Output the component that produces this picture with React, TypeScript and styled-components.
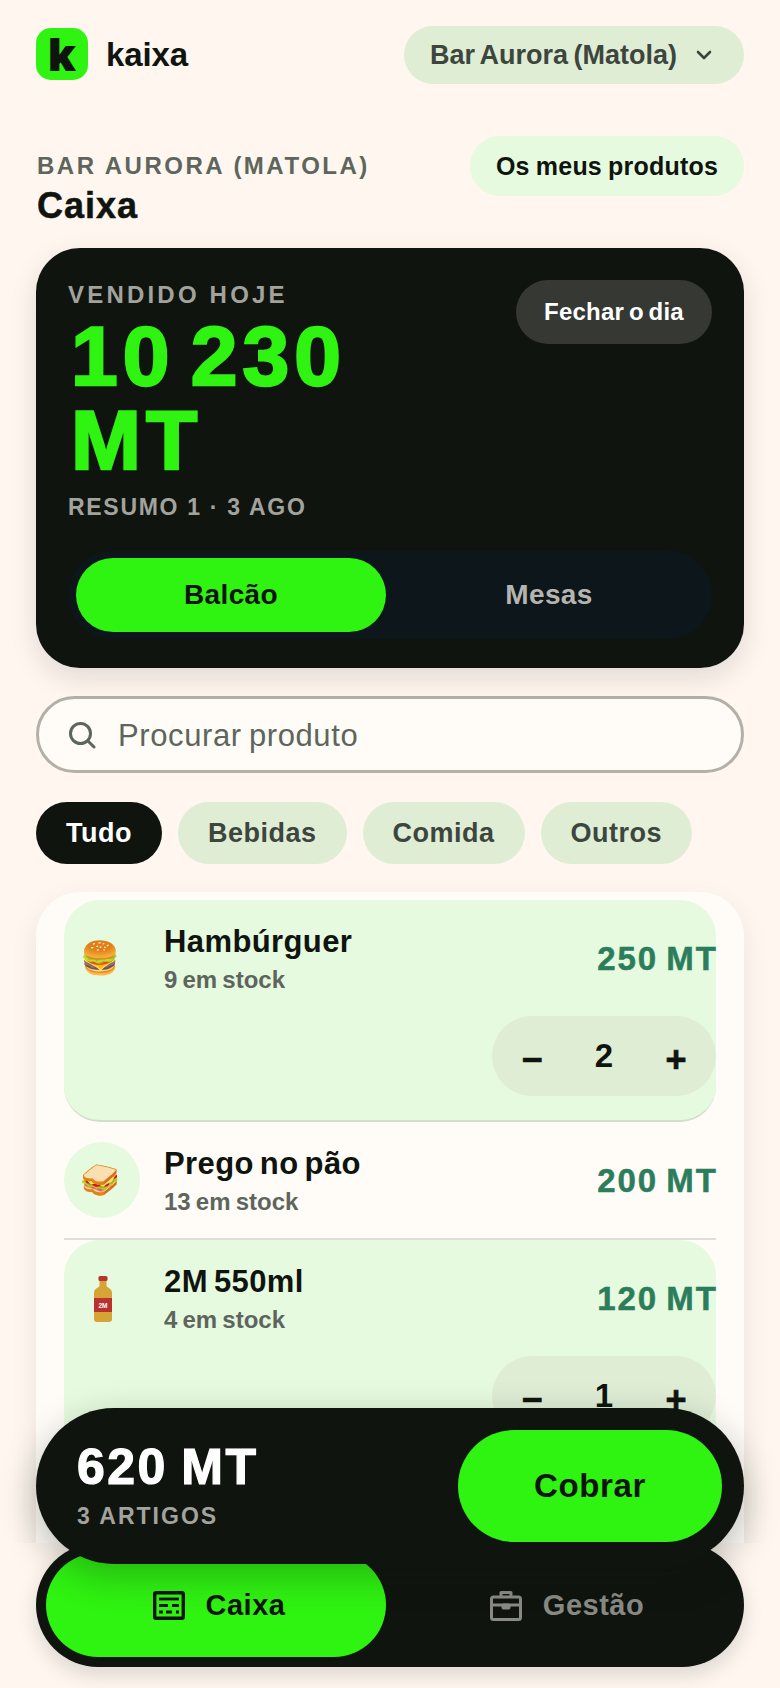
import React from 'react';
import styled, { createGlobalStyle } from 'styled-components';

const ink = '#10140f';
const lime = '#2ff311';
const mint = '#e6fadf';
const sage = '#dfedd5';
const muted = '#5d655c';
const sans = '"Liberation Sans", Arial, sans-serif';

const GlobalStyle = createGlobalStyle`
  * { box-sizing: border-box; }
  html, body { margin: 0; padding: 0; background: #fef6ef; }
  body { font-family: ${sans}; color: ${ink}; }
`;

const Page = styled.div`
  position: relative;
  height: 1688px;
  overflow: hidden;
  padding: 26px 36px 0;
  background: #fef6ef;
`;

const Header = styled.header`
  display: flex;
  align-items: center;
  justify-content: space-between;
  height: 58px;
`;

const Brand = styled.div`
  display: flex;
  align-items: center;
  gap: 18px;
`;

const LogoTile = styled.div`
  width: 52px;
  height: 52px;
  margin-top: -2px;
  border-radius: 15px;
  background: ${lime};
  display: flex;
  align-items: center;
  justify-content: center;
  font-family: Inter, sans-serif;
  font-weight: 900;
  font-size: 46px;
  line-height: 52px;
  color: ${ink};
`;

const BrandName = styled.span`
  font-size: 33px;
  font-weight: 700;
  letter-spacing: -0.1px;
`;

const StorePicker = styled.button`
  display: flex;
  align-items: center;
  gap: 18px;
  width: 340px;
  height: 58px;
  padding: 0 26px;
  border: none;
  border-radius: 29px;
  background: ${sage};
  color: #3d463d;
  font-family: ${sans};
  font-size: 27px;
  font-weight: 700;
  word-spacing: -2px;
  white-space: nowrap;
`;

const TitleRow = styled.div`
  display: flex;
  align-items: flex-start;
  justify-content: space-between;
  margin-top: 52px;
  height: 112px;
`;

const TitleBlock = styled.div`
  padding-top: 15px;
`;

const Eyebrow = styled.div`
  margin-left: 1px;
  font-size: 24px;
  line-height: 30px;
  font-weight: 700;
  letter-spacing: 2.5px;
  color: ${muted};
`;

const PageTitle = styled.h1`
  margin: 5px 0 0 1px;
  font-size: 36px;
  line-height: 40px;
  font-weight: 700;
  letter-spacing: 1px;
  -webkit-text-stroke: 0.5px ${ink};
`;

const ProductsButton = styled.button`
  width: 274px;
  height: 60px;
  border: none;
  border-radius: 30px;
  background: ${mint};
  color: ${ink};
  font-family: ${sans};
  font-size: 25px;
  font-weight: 700;
  letter-spacing: 0.2px;
  word-spacing: -1px;
`;

const Hero = styled.section`
  position: relative;
  height: 420px;
  padding: 33px 32px 29px;
  border-radius: 44px;
  background: ${ink};
  box-shadow: 0 10px 28px rgba(16, 20, 15, 0.12);
`;

const HeroLabel = styled.div`
  font-size: 24px;
  line-height: 27px;
  font-weight: 700;
  letter-spacing: 3.2px;
  color: #a3a39d;
`;

const Amount = styled.div`
  max-width: 400px;
  margin: 6px 0 0 3px;
  font-size: 84px;
  line-height: 84px;
  font-weight: 700;
  letter-spacing: 5px;
  word-spacing: -12px;
  color: ${lime};
  -webkit-text-stroke: 2.5px ${lime};
`;

const HeroNote = styled(HeroLabel)`
  margin-top: 12px;
  font-size: 23px;
  letter-spacing: 1.7px;
`;

const CloseDay = styled.button`
  position: absolute;
  top: 32px;
  right: 32px;
  width: 196px;
  height: 64px;
  border: none;
  border-radius: 32px;
  background: #363833;
  color: #fff;
  font-family: ${sans};
  font-size: 24px;
  font-weight: 700;
  letter-spacing: 0.2px;
  word-spacing: -2px;
`;

const Toggle = styled.div`
  display: grid;
  grid-template-columns: 1fr 1fr;
  gap: 8px;
  height: 88px;
  margin-top: 30px;
  padding: 7px 8px;
  border-radius: 44px;
  background: #0d161a;
`;

const ToggleOption = styled.div<{ $active?: boolean }>`
  display: flex;
  align-items: center;
  justify-content: center;
  border-radius: 37px;
  font-size: 28px;
  font-weight: 700;
  letter-spacing: 0.4px;
  background: ${(p) => (p.$active ? lime : 'transparent')};
  color: ${(p) => (p.$active ? ink : '#b5b5b0')};
`;

const Search = styled.div`
  display: flex;
  align-items: center;
  gap: 22px;
  height: 77px;
  margin-top: 28px;
  padding: 0 29px;
  border: 3px solid #b3b0a8;
  border-radius: 39px;
  background: #fffcf7;
  font-size: 31px;
  letter-spacing: 0.6px;
  word-spacing: -2px;
  color: ${muted};
`;

const SearchText = styled.span`
  margin-top: 2px;
`;

const Chips = styled.div`
  display: flex;
  gap: 16px;
  margin-top: 29px;
`;

const Chip = styled.div<{ $active?: boolean }>`
  display: flex;
  align-items: center;
  height: 62px;
  padding: 0 30px;
  border-radius: 31px;
  font-size: 27px;
  font-weight: 700;
  letter-spacing: 0.5px;
  background: ${(p) => (p.$active ? ink : sage)};
  color: ${(p) => (p.$active ? '#fff' : '#3d463d')};
`;

const List = styled.section`
  margin-top: 28px;
  padding: 8px 28px 320px;
  border-radius: 44px;
  background: #fffcf7;
  box-shadow: 0 10px 28px rgba(16, 20, 15, 0.08);
`;

const Row = styled.article<{ $selected?: boolean }>`
  padding: 20px 0 ${(p) => (p.$selected ? '24px' : '20px')};
  border-bottom: 2px solid ${(p) => (p.$selected ? '#cfdfc8' : '#dfdfda')};
  border-radius: ${(p) => (p.$selected ? '36px' : '0')};
  background: ${(p) => (p.$selected ? mint : 'transparent')};
`;

const RowMain = styled.div`
  display: flex;
  align-items: center;
  gap: 24px;
`;

const Thumb = styled.div`
  flex: none;
  display: flex;
  align-items: center;
  justify-content: center;
  width: 76px;
  height: 76px;
  padding-right: 4px;
  border-radius: 50%;
  background: ${mint};
  font-size: 32px;
  line-height: 1;
`;

const RowInfo = styled.div`
  flex: 1;
  padding-top: 2px;
`;

const ProductName = styled.div`
  font-size: 31px;
  line-height: 38px;
  font-weight: 700;
  letter-spacing: 0.4px;
  word-spacing: -3px;
`;

const Stock = styled.div`
  margin-top: 4px;
  font-size: 24px;
  line-height: 30px;
  font-weight: 700;
  word-spacing: -1.5px;
  color: ${muted};
`;

const Price = styled.div`
  margin: 2px -2px 0 0;
  font-size: 33px;
  font-weight: 700;
  letter-spacing: 2px;
  word-spacing: -3px;
  color: #2c7d5c;
  -webkit-text-stroke: 0.5px #2c7d5c;
`;

const Stepper = styled.div`
  display: grid;
  grid-template-columns: repeat(3, 1fr);
  align-items: center;
  width: 224px;
  height: 80px;
  margin: 20px 0 0 auto;
  padding: 0 4px;
  border-radius: 40px;
  background: ${sage};
  font-size: 33px;
  font-weight: 700;
  text-align: center;
`;

const StepSign = styled.span`
  padding-top: 8px;
  font-size: 36px;
  -webkit-text-stroke: 0.7px ${ink};
`;

const Checkout = styled.div`
  position: absolute;
  z-index: 2;
  left: 36px;
  right: 36px;
  top: 1408px;
  height: 156px;
  display: flex;
  align-items: center;
  justify-content: space-between;
  padding: 0 22px 0 41px;
  border-radius: 78px;
  background: ${ink};
  box-shadow: 0 12px 36px rgba(16, 20, 15, 0.28);
`;

const TotalBlock = styled.div`
  margin-top: -3px;
`;

const Total = styled.div`
  font-size: 50px;
  line-height: 56px;
  font-weight: 700;
  letter-spacing: 2.5px;
  word-spacing: -3px;
  color: #fff;
  -webkit-text-stroke: 1.2px #fff;
`;

const ItemCount = styled.div`
  margin-top: 7px;
  font-size: 23px;
  line-height: 28px;
  font-weight: 700;
  letter-spacing: 2px;
  color: #a3a39d;
`;

const ChargeButton = styled.button`
  width: 264px;
  height: 112px;
  border: none;
  border-radius: 56px;
  background: ${lime};
  color: ${ink};
  font-family: ${sans};
  font-size: 33px;
  font-weight: 700;
  letter-spacing: 0.6px;
`;

const BottomArea = styled.div`
  position: absolute;
  z-index: 1;
  left: 0;
  right: 0;
  bottom: 0;
  height: 145px;
  padding: 0 36px;
  background: #fef6ef;
`;

const Nav = styled.nav`
  display: grid;
  grid-template-columns: 1fr 1fr;
  gap: 8px;
  height: 124px;
  padding: 10px;
  border-radius: 62px;
  background: ${ink};
  box-shadow: 0 8px 20px rgba(16, 20, 15, 0.14);
`;

const NavTab = styled.div<{ $active?: boolean }>`
  display: flex;
  align-items: center;
  justify-content: center;
  gap: 21px;
  padding-left: 6px;
  border-radius: 52px;
  font-size: 29px;
  font-weight: 700;
  letter-spacing: 0.5px;
  background: ${(p) => (p.$active ? lime : 'transparent')};
  color: ${(p) => (p.$active ? ink : '#8a8a84')};
`;

const BottleArt = styled.svg`
  margin: 2px 0 0 6px;
`;

const Chevron = () => (
  <svg width="18" height="18" viewBox="0 0 18 18" fill="none" stroke="#3d463d" strokeWidth="2.6" strokeLinecap="round" strokeLinejoin="round">
    <path d="M3 6l6 6 6-6" />
  </svg>
);

const SearchIcon = () => (
  <svg width="28" height="28" viewBox="0 0 28 28" fill="none" stroke={muted} strokeWidth="3" strokeLinecap="round">
    <circle cx="12.5" cy="12.5" r="10" />
    <path d="M20 20l6 6" />
  </svg>
);

const TillIcon = () => (
  <svg width="32" height="29" viewBox="0 0 32 29" fill="none" stroke={ink} strokeWidth="3.4">
    <rect x="1.7" y="1.7" width="28.600" height="25.600" rx="1.500" />
    <path d="M6 8h20" strokeWidth="2.800" />
    <path d="M6 14.500h9M19 14.500h7" strokeWidth="2.800" />
    <path d="M6 21h4M13 21h6M23 21h3" strokeWidth="2.800" />
  </svg>
);

const CaseIcon = () => (
  <svg width="32" height="31" viewBox="0 0 32 31" fill="none" stroke="#8a8a84" strokeWidth="3" strokeLinejoin="round">
    <path d="M11 7V2.500h10V7" />
    <rect x="1.500" y="7" width="29" height="22.500" rx="2" />
    <path d="M1.500 15h29" />
    <rect x="12" y="14" width="8" height="5" rx="1" fill="#8a8a84" strokeWidth="1" />
  </svg>
);

const Bottle = () => (
  <BottleArt width="18" height="46" viewBox="0 0 18 46">
    <rect x="4.500" y="0" width="9" height="5" rx="1.500" fill="#b8322f" />
    <path d="M5.500 5h7v4.500c0 2 5.500 3 5.500 7V43a3 3 0 0 1-3 3H3a3 3 0 0 1-3-3V16.500c0-4 5.500-5 5.500-7z" fill="#d6a335" />
    <rect x="0" y="22" width="18" height="14" fill="#b8322f" />
    <text x="9" y="31.500" textAnchor="middle" fontSize="6.500" fontWeight="700" fontFamily={sans} fill="#fff">2M</text>
  </BottleArt>
);

const products = [
  { name: 'Hambúrguer', stock: '9 em stock', price: '250 MT', qty: 2, thumb: <>🍔</> },
  { name: 'Prego no pão', stock: '13 em stock', price: '200 MT', qty: 0, thumb: <>🥪</> },
  { name: '2M 550ml', stock: '4 em stock', price: '120 MT', qty: 1, thumb: <Bottle /> },
];

const App: React.FC = () => (
  <Page>
    <GlobalStyle />
    <Header>
      <Brand>
        <LogoTile>k</LogoTile>
        <BrandName>kaixa</BrandName>
      </Brand>
      <StorePicker>
        Bar Aurora (Matola)
        <Chevron />
      </StorePicker>
    </Header>

    <TitleRow>
      <TitleBlock>
        <Eyebrow>BAR AURORA (MATOLA)</Eyebrow>
        <PageTitle>Caixa</PageTitle>
      </TitleBlock>
      <ProductsButton>Os meus produtos</ProductsButton>
    </TitleRow>

    <Hero>
      <HeroLabel>VENDIDO HOJE</HeroLabel>
      <Amount>10 230 MT</Amount>
      <HeroNote>RESUMO 1 · 3 AGO</HeroNote>
      <CloseDay>Fechar o dia</CloseDay>
      <Toggle>
        <ToggleOption $active>Balcão</ToggleOption>
        <ToggleOption>Mesas</ToggleOption>
      </Toggle>
    </Hero>

    <Search>
      <SearchIcon />
      <SearchText>Procurar produto</SearchText>
    </Search>

    <Chips>
      <Chip $active>Tudo</Chip>
      <Chip>Bebidas</Chip>
      <Chip>Comida</Chip>
      <Chip>Outros</Chip>
    </Chips>

    <List>
      {products.map((item) => (
        <Row key={item.name} $selected={item.qty > 0}>
          <RowMain>
            <Thumb>{item.thumb}</Thumb>
            <RowInfo>
              <ProductName>{item.name}</ProductName>
              <Stock>{item.stock}</Stock>
            </RowInfo>
            <Price>{item.price}</Price>
          </RowMain>
          {item.qty > 0 && (
            <Stepper>
              <StepSign>−</StepSign>
              <span>{item.qty}</span>
              <StepSign>+</StepSign>
            </Stepper>
          )}
        </Row>
      ))}
    </List>

    <Checkout>
      <TotalBlock>
        <Total>620 MT</Total>
        <ItemCount>3 ARTIGOS</ItemCount>
      </TotalBlock>
      <ChargeButton>Cobrar</ChargeButton>
    </Checkout>

    <BottomArea>
      <Nav>
        <NavTab $active>
          <TillIcon />
          Caixa
        </NavTab>
        <NavTab>
          <CaseIcon />
          Gestão
        </NavTab>
      </Nav>
    </BottomArea>
  </Page>
);

export default App;
